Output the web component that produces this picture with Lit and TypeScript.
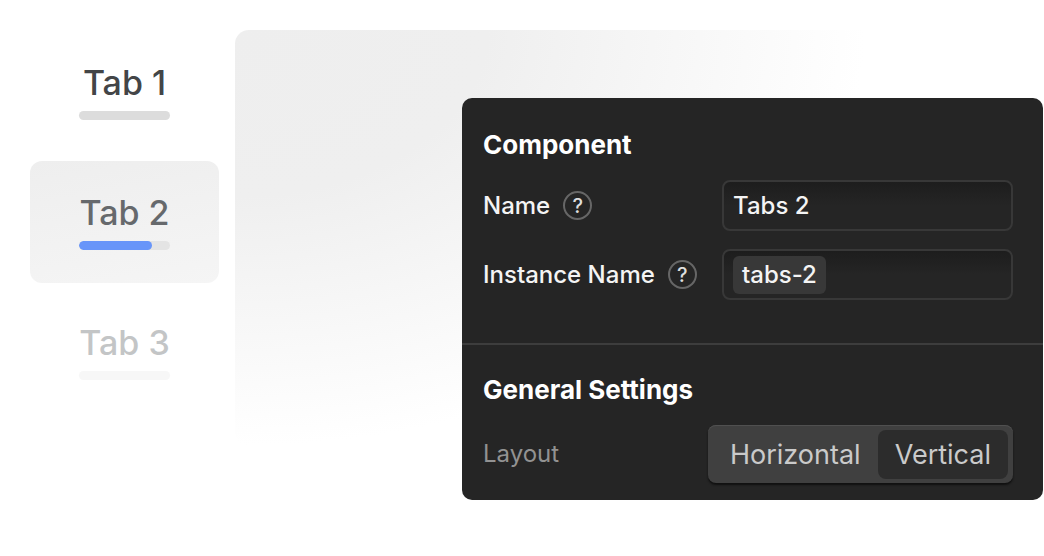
import { LitElement, html, css } from "lit";
import { customElement, property, state } from "lit/decorators.js";
import { classMap } from "lit/directives/class-map.js";
import { styleMap } from "lit/directives/style-map.js";

interface TabItem {
  label: string;
  tone: "dark" | "active" | "faded";
  progress: number;
}

@customElement("tab-list")
class TabList extends LitElement {
  @state() private tabs: TabItem[] = [
    { label: "Tab 1", tone: "dark", progress: 0 },
    { label: "Tab 2", tone: "active", progress: 80 },
    { label: "Tab 3", tone: "faded", progress: 0 },
  ];

  static styles = css`
    :host {
      display: block;
    }
    .list {
      display: flex;
      flex-direction: column;
      gap: 8px;
    }
    .tab {
      display: flex;
      flex-direction: column;
      align-items: stretch;
      gap: 8px;
      margin: 0;
      padding: 32px 49px 33px;
      border: 0;
      border-radius: 12px;
      background: transparent;
      font: 500 34px/40px Inter, sans-serif;
      text-align: center;
      white-space: nowrap;
      color: #434547;
    }
    .label {
      display: flex;
      justify-content: center;
    }
    .track {
      height: 9px;
      border-radius: 5px;
      background: #dcdcdc;
      overflow: hidden;
    }
    .fill {
      height: 100%;
      border-radius: 5px;
      background: #6895f9;
    }
    .active {
      background: linear-gradient(170deg, #eeeeee, #f5f5f5);
      color: #66696c;
    }
    .active .track {
      background: #e4e4e4;
    }
    .faded {
      color: #c3c5c6;
    }
    .faded .track {
      background: #f7f7f7;
    }
  `;

  render() {
    return html`<div class="list" role="tablist" aria-orientation="vertical">
      ${this.tabs.map(
        (t) => html`<button
          class=${classMap({ tab: true, [t.tone]: true })}
          role="tab"
          aria-selected=${t.tone === "active" ? "true" : "false"}
        >
          <span class="label">${t.label}</span>
          <div class="track">
            ${t.progress
              ? html`<div class="fill" style=${styleMap({ width: `${t.progress}%` })}></div>`
              : null}
          </div>
        </button>`
      )}
    </div>`;
  }
}

@customElement("settings-card")
class SettingsCard extends LitElement {
  @property() layout = "Vertical";

  static styles = css`
    :host {
      display: block;
      border-radius: 10px;
      background: #252525;
      color: #f4f4f4;
      font: 500 24px/32px Inter, sans-serif;
      overflow: hidden;
    }
    .section {
      display: flex;
      flex-direction: column;
      gap: 18px;
      padding: 30px 30px 43px 21px;
    }
    .section + .section {
      border-top: 2px solid #3d3d3d;
      padding: 28px 30px 17px 21px;
    }
    .title {
      margin: 0;
      font-size: 26px;
      line-height: 34px;
      font-weight: 700;
      color: #ffffff;
    }
    .row {
      display: grid;
      grid-template-columns: 221px minmax(0, 1fr);
      gap: 18px;
      align-items: center;
    }
    .name {
      display: flex;
      align-items: center;
      gap: 13px;
      white-space: nowrap;
    }
    .help {
      box-sizing: border-box;
      display: grid;
      place-items: center;
      width: 29px;
      height: 29px;
      padding: 0;
      border: 2px solid #666666;
      border-radius: 50%;
      background: transparent;
      color: #dedede;
      font: 500 20px/24px Inter, sans-serif;
    }
    .field {
      box-sizing: border-box;
      display: flex;
      align-items: center;
      gap: 8px;
      width: 100%;
      height: 51px;
      padding: 0 9px;
      border: 2px solid #383838;
      border-radius: 8px;
      background: linear-gradient(#1d1d1d, #252525 50%);
    }
    .input {
      flex: 1;
      min-width: 0;
      padding: 0;
      border: 0;
      outline: 0;
      background: transparent;
      color: inherit;
      font: inherit;
    }
    .chip {
      padding: 3px 9px;
      border-radius: 6px;
      background: #383838;
    }
    .wide {
      display: flex;
      align-items: center;
      justify-content: space-between;
    }
    .muted {
      font-weight: 400;
      color: #929292;
    }
    .segmented {
      display: flex;
      padding: 5px 5px 4px;
      border-radius: 8px;
      background: #404040;
      box-shadow: inset 0 1px 0 #505050, 0 2px 2px #101010;
    }
    .option {
      padding: 9px 17px;
      border: 0;
      border-radius: 8px;
      background: transparent;
      color: #cacaca;
      font: 400 27px/31px Inter, sans-serif;
    }
    .chosen {
      background: #2c2c2c;
    }
  `;

  render() {
    return html`
      <section class="section">
        <h2 class="title">Component</h2>
        <div class="row">
          <div class="name">
            <label for="name">Name</label>
            <button class="help" aria-label="About name">?</button>
          </div>
          <div class="field"><input class="input" id="name" value="Tabs 2" /></div>
        </div>
        <div class="row">
          <div class="name">
            <label for="instance">Instance Name</label>
            <button class="help" aria-label="About instance name">?</button>
          </div>
          <div class="field">
            <span class="chip">tabs-2</span>
            <input class="input" id="instance" />
          </div>
        </div>
      </section>
      <section class="section">
        <h2 class="title">General Settings</h2>
        <div class="wide">
          <span class="muted" id="layout">Layout</span>
          <div class="segmented" role="group" aria-labelledby="layout">
            ${["Horizontal", "Vertical"].map(
              (o) => html`<button
                class=${classMap({ option: true, chosen: o === this.layout })}
                aria-pressed=${o === this.layout ? "true" : "false"}
                @click=${() => (this.layout = o)}
              >${o}</button>`
            )}
          </div>
        </div>
      </section>
    `;
  }
}

@customElement("app-root")
class AppRoot extends LitElement {
  static styles = css`
    :host {
      display: block;
      min-height: 100vh;
      box-sizing: border-box;
      background: #ffffff;
    }
    .page {
      display: grid;
      grid-template-columns: 189px minmax(0, 1fr);
      column-gap: 16px;
      align-items: start;
      padding: 30px 1px 30px 30px;
    }
    .tabs {
      margin-top: 1px;
    }
    .panel {
      grid-area: 1 / 2;
      height: 416px;
      border-radius: 14px;
      background: radial-gradient(ellipse 78% 100% at 0 0, #eeeeee, #efefef 40%, #f7f7f7 70%, #ffffff);
    }
    .card {
      grid-area: 1 / 2;
      margin: 68px 0 0 227px;
    }
  `;

  render() {
    return html`<main class="page">
      <tab-list class="tabs"></tab-list>
      <div class="panel"></div>
      <settings-card class="card"></settings-card>
    </main>`;
  }
}
